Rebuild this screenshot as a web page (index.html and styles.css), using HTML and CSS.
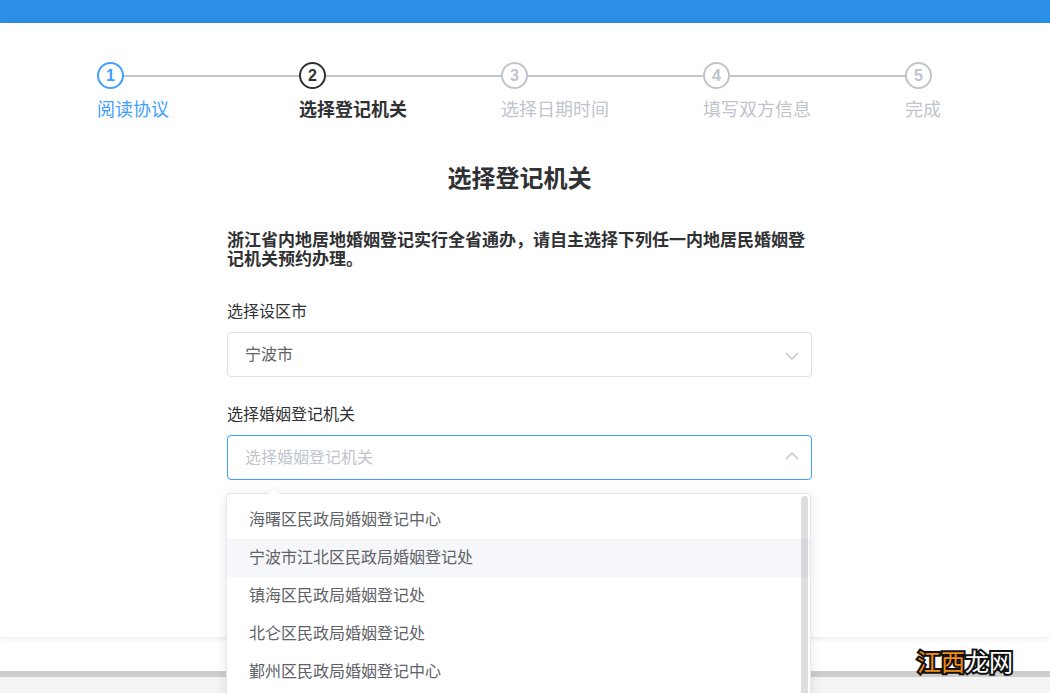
FILE: index.html
```html
<!DOCTYPE html>
<html lang="zh-CN">
<head>
<meta charset="utf-8">
<meta name="viewport" content="width=device-width, initial-scale=1">
<title>选择登记机关</title>
<link rel="stylesheet" href="styles.css">
</head>
<body>
<div class="page">
  <header class="topbar"></header>
  <main class="content">
    <ol class="steps">
      <li class="step done"><div class="step-head"><span class="step-icon">1</span></div><div class="step-title">阅读协议</div></li>
      <li class="step current" aria-current="step"><div class="step-head"><span class="step-icon">2</span></div><div class="step-title">选择登记机关</div></li>
      <li class="step"><div class="step-head"><span class="step-icon">3</span></div><div class="step-title">选择日期时间</div></li>
      <li class="step"><div class="step-head"><span class="step-icon">4</span></div><div class="step-title">填写双方信息</div></li>
      <li class="step"><div class="step-head"><span class="step-icon">5</span></div><div class="step-title">完成</div></li>
    </ol>
    <h1 class="title">选择登记机关</h1>
    <form class="form">
      <p class="notice">浙江省内地居地婚姻登记实行全省通办，请自主选择下列任一内地居民婚姻登记机关预约办理。</p>
      <div class="field">
        <label class="label" for="city">选择设区市</label>
        <div class="control">
          <select class="select" id="city"><option>宁波市</option></select>
          <svg class="arrow" viewBox="0 0 14 14" aria-hidden="true"><path d="M1 5 7 11 13 5"/></svg>
        </div>
      </div>
      <div class="field">
        <label class="label" for="office">选择婚姻登记机关</label>
        <div class="control">
          <select class="select open" id="office"><option value="">选择婚姻登记机关</option></select>
          <svg class="arrow" viewBox="0 0 14 14" aria-hidden="true"><path d="M1 8 7 2 13 8"/></svg>
          <div class="dropdown">
            <svg class="pointer" viewBox="0 0 12 7" aria-hidden="true"><path class="pointer-fill" d="M0 7 6 1 12 7Z"/><path class="pointer-edge" d="M0 6.5 6 .5 12 6.5"/></svg>
            <ul class="options" role="listbox" aria-label="选择婚姻登记机关">
              <li class="option" role="option">海曙区民政局婚姻登记中心</li>
              <li class="option hover" role="option">宁波市江北区民政局婚姻登记处</li>
              <li class="option" role="option">镇海区民政局婚姻登记处</li>
              <li class="option" role="option">北仑区民政局婚姻登记处</li>
              <li class="option" role="option">鄞州区民政局婚姻登记中心</li>
            </ul>
            <span class="scrollbar"></span>
          </div>
        </div>
      </div>
    </form>
  </main>
  <div class="strip"></div>
  <footer class="footer"></footer>
  <div class="brand"><span class="brand-accent">江西</span>龙网</div>
</div>
</body>
</html>
```
FILE: styles.css
```css
* {
  box-sizing: border-box;
}

body {
  margin: 0;
  background: #f4f4f4;
  color: #303133;
  font-family: "Liberation Sans", "Noto Sans CJK SC", sans-serif;
  font-size: 16px;
}

.page {
  position: relative;
  display: flex;
  flex-direction: column;
  height: 100vh;
  overflow: hidden;
}

.topbar {
  flex: none;
  height: 23px;
  background: #2b8fe8;
}

.content {
  position: relative;
  z-index: 1;
  flex: none;
  padding: 39px 108px 157px 97px;
  background: #fff;
  box-shadow: 0 1px 6px rgba(0, 0, 0, 0.1);
}

.steps {
  display: flex;
  margin: 0;
  padding: 0 1px 0 0;
  list-style: none;
  color: #c0c4cc;
}

.step {
  flex: 1;
}

.step:last-child {
  flex: none;
}

.step-head {
  display: flex;
  align-items: center;
}

.step-head::after {
  content: "";
  flex: 1;
  height: 2px;
  background: #c0c4cc;
}

.step:last-child .step-head::after {
  content: none;
}

.step-icon {
  width: 27px;
  height: 27px;
  border: 2px solid;
  border-radius: 50%;
  font-weight: 700;
  line-height: 23px;
  text-align: center;
}

.step-title {
  font-size: 18px;
  line-height: 42px;
}

.done {
  color: #409eff;
}

.current {
  color: #303133;
}

.current .step-title {
  font-weight: 700;
}

.title {
  margin: 32px 0 0;
  font-size: 24px;
  line-height: 32px;
  text-align: center;
}

.form {
  max-width: 585px;
  margin: 36px auto 0;
}

.notice {
  margin: 0;
  font-size: 17px;
  font-weight: 700;
  line-height: 19px;
}

.field {
  margin-top: 27px;
}

.notice + .field {
  margin-top: 32px;
}

.label {
  display: block;
  margin-bottom: 9px;
  line-height: 22px;
}

.control {
  position: relative;
}

.select {
  display: block;
  width: 100%;
  height: 45px;
  padding: 0 40px 0 17px;
  border: 1px solid #dcdfe6;
  border-radius: 4px;
  outline: 0;
  appearance: none;
  background: #fff;
  color: #606266;
  font: inherit;
}

.select.open {
  border-color: #409eff;
  color: #c0c4cc;
}

.arrow {
  position: absolute;
  top: 16px;
  right: 13px;
  width: 14px;
  height: 14px;
  fill: none;
  stroke: #c0c4cc;
  stroke-width: 1.4;
  pointer-events: none;
}

.dropdown {
  position: absolute;
  top: 58px;
  left: -1px;
  right: 1px;
  height: 274px;
  padding: 7px 0;
  border: 1px solid #e4e7ed;
  border-radius: 4px;
  background: #fff;
  box-shadow: 0 2px 12px rgba(0, 0, 0, 0.1);
}

.pointer {
  position: absolute;
  top: -7px;
  left: 41px;
  width: 12px;
  height: 7px;
}

.pointer-fill {
  fill: #fff;
}

.pointer-edge {
  fill: none;
  stroke: #ebeef5;
}

.options {
  margin: 0;
  padding: 0;
  list-style: none;
  color: #606266;
}

.option {
  padding: 0 22px;
  line-height: 38px;
}

.option.hover {
  background: #f5f7fa;
}

.scrollbar {
  position: absolute;
  top: 2px;
  right: 2px;
  bottom: 2px;
  width: 7px;
  border-radius: 4px;
  background: rgba(144, 147, 153, 0.3);
}

.strip {
  flex: none;
  height: 40px;
  border-bottom: 6px solid #cdcdcd;
  background: #fff;
}

.footer {
  flex: 1;
}

.brand {
  position: absolute;
  right: 37px;
  bottom: 14px;
  z-index: 2;
  color: #fff;
  font-size: 24px;
  line-height: 32px;
  -webkit-text-stroke: 4px #111;
  paint-order: stroke fill;
}

.brand-accent {
  color: #f08c14;
}
```
